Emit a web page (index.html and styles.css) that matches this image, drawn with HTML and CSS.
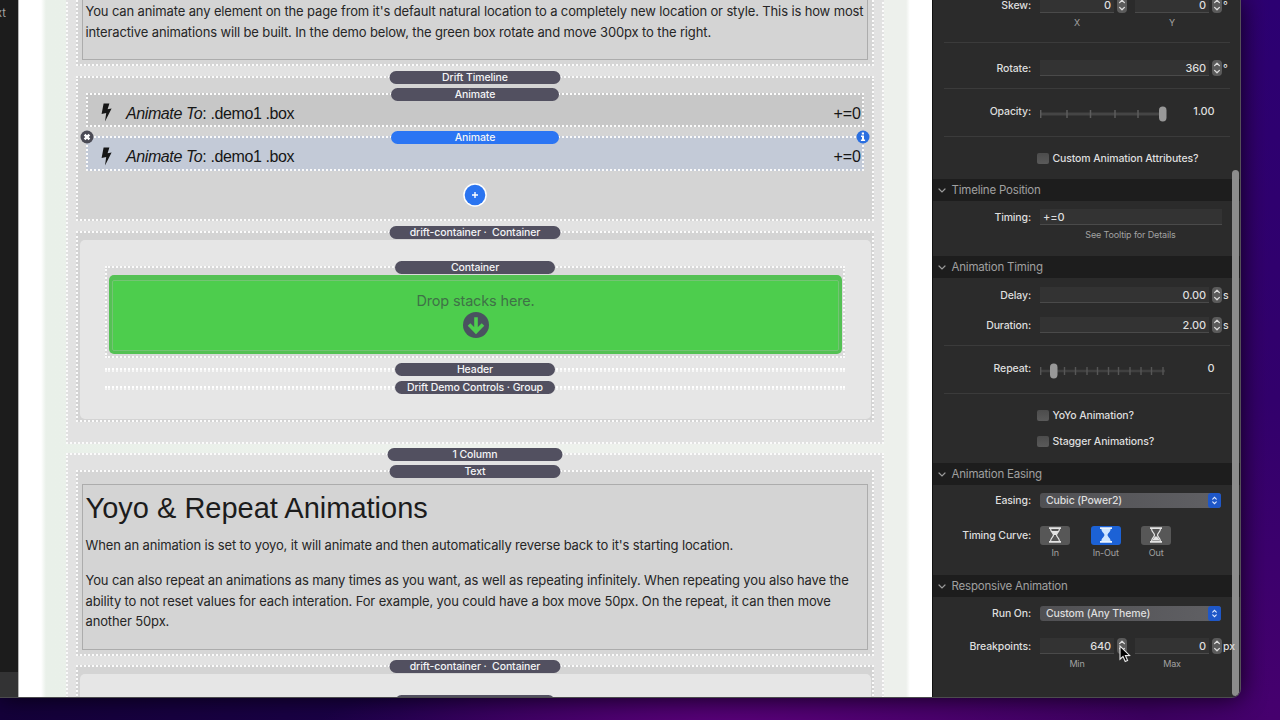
FILE: index.html
```
<!DOCTYPE html>
<html lang="en">
<head>
    <meta charset="UTF-8">
    <meta name="viewport" content="width=device-width, initial-scale=1.0">
    <title>Drift Demo</title>
    <link rel="stylesheet" href="styles.css">
</head>
<body>

<svg class="sprite" width="0" height="0">
    <symbol id="bolt" viewBox="0 0 11 19">
        <path d="M2.6 0.5 H8.4 L6.6 6.2 L10.6 5.6 L4 18.5 L5.2 10 L0.6 11 Z"/>
    </symbol>
    <symbol id="stepper" viewBox="0 0 10 16">
        <rect width="10" height="16" rx="4" fill="#5b5b5b"/>
        <path d="M2.6 5.6 L5 3.2 L7.4 5.6 M2.6 10.4 L5 12.8 L7.4 10.4" fill="none" stroke="#dcdcdc" stroke-width="1.3" stroke-linecap="round" stroke-linejoin="round"/>
    </symbol>
    <symbol id="chevron" viewBox="0 0 8 5">
        <path d="M1 1 L4 4 L7 1" fill="none" stroke="#9a9a9a" stroke-width="1.2" stroke-linecap="round"/>
    </symbol>
    <symbol id="updown" viewBox="0 0 13 15">
        <path d="M4.7 6.2 L6.5 4.4 L8.3 6.2 M4.7 8.8 L6.5 10.6 L8.3 8.8" fill="none" stroke="#dfe9ff" stroke-width="1.1" stroke-linecap="round"/>
    </symbol>
</svg>

<div class="window">
    <div class="sidebar">
        <span class="sidebar-text">xt</span>
        <div class="sidebar-footer"></div>
    </div>

    <div class="canvas">
        <div class="page">
            <div class="stack section section-first">
                <div class="stack text-stack text-stack-first">
                    <div class="text-box">
                        <p>You can animate any element on the page from it's default natural location to a completely new location or style. This is how most<br>interactive animations will be built. In the demo below, the green box rotate and move 300px to the right.</p>
                    </div>
                </div>

                <div class="stack timeline">
                    <span class="pill pill-lg">Drift Timeline</span>
                    <div class="stack animate">
                        <span class="pill pill-md">Animate</span>
                        <svg class="bolt"><use href="#bolt"/></svg>
                        <span class="animate-name"><i>Animate To</i>: .demo1 .box</span>
                        <span class="animate-time">+=0</span>
                    </div>
                    <div class="stack animate selected">
                        <span class="pill pill-md">Animate</span>
                        <svg class="badge badge-close" viewBox="0 0 14 14"><circle cx="7" cy="7" r="6.5" fill="#4b4b55"/><path d="M4.6 4.6 L9.4 9.4 M9.4 4.6 L4.6 9.4" stroke="#fff" stroke-width="2.4"/></svg>
                        <svg class="badge badge-info" viewBox="0 0 14 14"><circle cx="7" cy="7" r="6.5" fill="#2a6fe0"/><path d="M5.8 2.6 H8 V4.5 H5.8 Z M5 5.6 H8 V9.6 H9.1 V11 H4.9 V9.6 H6 V7 H5 Z" fill="#fff"/></svg>
                        <svg class="bolt"><use href="#bolt"/></svg>
                        <span class="animate-name"><i>Animate To</i>: .demo1 .box</span>
                        <span class="animate-time">+=0</span>
                    </div>
                    <svg class="add" viewBox="0 0 24 24"><circle cx="12" cy="12" r="11.8" fill="#fff"/><circle cx="12" cy="12" r="10.3" fill="#2a74f0"/><path d="M12 9 V15 M9 12 H15" stroke="#fff" stroke-width="1.4"/></svg>
                </div>

                <div class="stack container">
                    <span class="pill pill-lg">drift-container ·&nbsp; Container</span>
                    <div class="container-box">
                        <div class="stack drop-stack">
                            <span class="pill pill-sm">Container</span>
                            <div class="drop-box">
                                <div class="drop-inner">
                                    <span class="drop-text">Drop stacks here.</span>
                                    <svg class="drop-icon" viewBox="0 0 26 26"><circle cx="13" cy="13" r="13" fill="#4a5260"/><path d="M13 5.2 V19 M6 12.6 L13 19.6 L20 12.6" fill="none" stroke="#4dcd4d" stroke-width="3.6"/></svg>
                                </div>
                            </div>
                        </div>
                        <div class="empty-stack"><span class="pill pill-sm">Header</span></div>
                        <div class="empty-stack"><span class="pill pill-sm">Drift Demo Controls · Group</span></div>
                    </div>
                </div>
            </div>

            <div class="stack section section-second">
                <span class="pill pill-xl">1 Column</span>
                <div class="stack text-stack">
                    <span class="pill pill-lg">Text</span>
                    <div class="text-box">
                        <h2>Yoyo &amp; Repeat Animations</h2>
                        <p>When an animation is set to yoyo, it will animate and then automatically reverse back to it's starting location.</p>
                        <p>You can also repeat an animations as many times as you want, as well as repeating infinitely. When repeating you also have the<br>ability to not reset values for each interation. For example, you could have a box move 50px. On the repeat, it can then move<br>another 50px.</p>
                    </div>
                </div>
                <div class="stack container">
                    <span class="pill pill-lg">drift-container ·&nbsp; Container</span>
                    <div class="container-box">
                        <div class="stack drop-stack"><span class="pill pill-sm"></span></div>
                    </div>
                </div>
            </div>
        </div>
    </div>

    <div class="inspector">
        <div class="group group-transform">
            <div class="row">
                <label>Skew:</label>
                <span class="field half">0</span><svg class="stepper"><use href="#stepper"/></svg>
                <span class="field half second">0</span><svg class="stepper"><use href="#stepper"/></svg>
                <span class="unit">°</span>
            </div>
            <div class="captions wide"><span>X</span><span>Y</span></div>
            <hr>
            <div class="row rotate">
                <label>Rotate:</label>
                <span class="field">360</span><svg class="stepper"><use href="#stepper"/></svg>
                <span class="unit">°</span>
            </div>
            <hr class="tight">
            <div class="row opacity">
                <label>Opacity:</label>
                <svg class="slider" viewBox="0 0 128 16"><path d="M0 8 H126" stroke="#454545" stroke-width="3"/><path d="M.7 4 V12 M27 4 V12 M50.5 4 V12 M75 4 V12 M98 4 V12" stroke="#5c5c5c" stroke-width="1.5"/><rect x="119" y="0.5" width="7.5" height="15" rx="3.7" fill="#989898"/></svg>
                <span class="value">1.00</span>
            </div>
            <hr class="after">
            <div class="row check"><span class="checkbox"></span>Custom Animation Attributes?</div>
        </div>

        <div class="heading heading-position"><svg class="chevron"><use href="#chevron"/></svg>Timeline Position</div>
        <div class="group">
            <div class="row timing">
                <label>Timing:</label>
                <span class="field text">+=0</span>
            </div>
            <div class="captions single"><span>See Tooltip for Details</span></div>
        </div>

        <div class="heading heading-timing"><svg class="chevron"><use href="#chevron"/></svg>Animation Timing</div>
        <div class="group">
            <div class="row delay">
                <label>Delay:</label>
                <span class="field">0.00</span><svg class="stepper"><use href="#stepper"/></svg>
                <span class="unit">s</span>
            </div>
            <div class="row duration">
                <label>Duration:</label>
                <span class="field">2.00</span><svg class="stepper"><use href="#stepper"/></svg>
                <span class="unit">s</span>
            </div>
            <hr class="tight">
            <div class="row opacity">
                <label>Repeat:</label>
                <svg class="slider" viewBox="0 0 128 16"><path d="M0 8 H125" stroke="#404040" stroke-width="2.5"/><path d="M.7 4 V12 M24.5 4 V12 M35.5 4 V12 M47 4 V12 M57.5 4 V12 M68.5 4 V12 M78.5 4 V12 M90 4 V12 M101 4 V12 M111.5 4 V12 M123 4 V12" stroke="#565656" stroke-width="1.4"/><rect x="10" y="0.5" width="7.5" height="15" rx="3.7" fill="#989898"/></svg>
                <span class="value">0</span>
            </div>
            <hr class="after">
            <div class="row check"><span class="checkbox"></span>YoYo Animation?</div>
            <div class="row check second-check"><span class="checkbox"></span>Stagger Animations?</div>
        </div>

        <div class="heading heading-easing"><svg class="chevron"><use href="#chevron"/></svg>Animation Easing</div>
        <div class="group">
            <div class="row easing">
                <label>Easing:</label>
                <span class="select">Cubic (Power2)<svg class="updown"><use href="#updown"/></svg></span>
            </div>
            <div class="row curve">
                <label>Timing Curve:</label>
                <span class="curve-button"><svg viewBox="0 0 14 16"><path d="M1 1.2 H13 M1 14.8 H13" stroke="#e4e4e4" stroke-width="1.8"/><path d="M2.6 2 C2.6 5 5.5 6 5.5 8 C5.5 10 2.6 11 2.6 14 M11.4 2 C11.4 5 8.5 6 8.5 8 C8.5 10 11.4 11 11.4 14" fill="none" stroke="#e4e4e4" stroke-width="1.2"/><path d="M3.2 4 H10.8 L8 8 H6 Z" fill="#e4e4e4"/></svg></span>
                <span class="curve-button active"><svg viewBox="0 0 14 16"><path d="M1 1.2 H13 M1 14.8 H13" stroke="#eaf4ff" stroke-width="1.8"/><path d="M2.4 2 H11.6 C11.6 5 8.6 6 8.6 8 C8.6 10 11.6 11 11.6 14 H2.4 C2.4 11 5.4 10 5.4 8 C5.4 6 2.4 5 2.4 2 Z" fill="#cfe6ff"/></svg></span>
                <span class="curve-button"><svg viewBox="0 0 14 16"><path d="M1 1.2 H13 M1 14.8 H13" stroke="#e4e4e4" stroke-width="1.8"/><path d="M2.6 2 C2.6 5 5.5 6 5.5 8 C5.5 10 2.6 11 2.6 14 M11.4 2 C11.4 5 8.5 6 8.5 8 C8.5 10 11.4 11 11.4 14" fill="none" stroke="#e4e4e4" stroke-width="1.2"/><path d="M6 9.5 H8 L11 13.5 H3 Z" fill="#e4e4e4"/></svg></span>
            </div>
            <div class="captions curves"><span>In</span><span>In-Out</span><span>Out</span></div>
        </div>

        <div class="heading heading-responsive"><svg class="chevron"><use href="#chevron"/></svg>Responsive Animation</div>
        <div class="group">
            <div class="row run-on">
                <label>Run On:</label>
                <span class="select">Custom (Any Theme)<svg class="updown"><use href="#updown"/></svg></span>
            </div>
            <div class="row breakpoints">
                <label>Breakpoints:</label>
                <span class="field half">640</span><svg class="stepper"><use href="#stepper"/></svg>
                <span class="field half second">0</span><svg class="stepper"><use href="#stepper"/></svg>
                <span class="unit unit-px">px</span>
            </div>
            <div class="captions wide"><span>Min</span><span>Max</span></div>
        </div>
        <div class="scrollbar"></div>
    </div>
</div>

<svg class="cursor" viewBox="0 0 12 18"><path d="M1 1 V14.2 L4 11.5 L6.2 16.5 L8.6 15.4 L6.4 10.6 L10.6 10.4 Z" fill="#000" stroke="#e8e8e8" stroke-width="1.1"/></svg>

</body>
</html>
```
FILE: styles.css
```
* {
    box-sizing: border-box;
}

body {
    margin: 0;
    width: 1280px;
    height: 720px;
    overflow: hidden;
    background:
        radial-gradient(ellipse 420px 60px at 740px 725px, #5a007a, transparent),
        linear-gradient(to right, #14003a 0, #1b0048 400px, #38005e 700px, #3c0060 1150px, transparent 1270px),
        linear-gradient(#2c0072, #32006c 400px, #46006e 720px);
    font-family: Inter, "Liberation Sans", sans-serif;
}

.sprite {
    position: absolute;
}

.window {
    position: relative;
    display: flex;
    width: 1241px;
    height: 698px;
    border-right: 1px solid #555058;
    border-bottom: 1px solid #4c4c4e;
    border-bottom-right-radius: 9px;
    overflow: hidden;
    box-shadow: 0 0 24px 0 rgba(0, 0, 0, 0.75);
}

/* left sidebar */
.sidebar {
    display: flex;
    flex-direction: column;
    justify-content: space-between;
    width: 18px;
    background: #1c1c1c;
    color: #a8a8a8;
    font-size: 11px;
    overflow: hidden;
}

.sidebar-text {
    padding-top: 6px;
    text-indent: -4px;
    line-height: 14px;
}

.sidebar-footer {
    height: 25px;
    background: #333334;
}

/* editing canvas */
.canvas {
    width: 914px;
    height: 697px;
    padding: 0 22px;
    background: #fff;
    border-left: 1px solid #b4b4b4;
    overflow: hidden;
}

.page {
    height: 697px;
    padding: 0 24px 0 25px;
    background: linear-gradient(to right, #fff, #e9f0e9 5px, #edf1ec 50%, #edf0ec 865px, #fff);
    overflow: hidden;
}

.stack {
    position: relative;
    border: 2px dotted #fbfbfb;
}

.section {
    display: flex;
    flex-direction: column;
    gap: 10px;
    width: 818px;
    padding: 0 8px;
    background-color: #e2e2e2;
}

.section-first {
    height: 474px;
    margin-top: -30px;
}

.section-second {
    height: 320px;
    margin-top: 9px;
    padding-top: 15px;
    gap: 9px;
}

.pill {
    position: absolute;
    top: -7.5px;
    left: 50%;
    height: 13px;
    transform: translateX(-50%);
    border-radius: 7px;
    background: #525060;
    color: #f4f4f6;
    font-size: 10.5px;
    font-weight: 500;
    letter-spacing: -0.1px;
    line-height: 13px;
    text-align: center;
    white-space: nowrap;
    z-index: 1;
}

.pill-sm {
    width: 160px;
}

.pill-md {
    width: 168px;
}

.pill-lg {
    width: 171px;
}

.pill-xl {
    width: 175px;
}

.section-second .pill {
    top: -7px;
}

.text-stack {
    height: 186px;
    padding: 12px 4px 4px;
    background-color: #d6d6d6;
}

.text-stack-first {
    height: 94px;
}

.text-box {
    height: 166px;
    padding: 3px 2.5px;
    border: 1px solid #acacac;
    background: #d4d4d4;
    color: #262626;
}

.text-stack-first .text-box {
    height: 74px;
    padding-top: 14px;
}

.text-box p {
    margin: 0 0 14.5px;
    font-size: 13px;
    letter-spacing: -0.135px;
    line-height: 20.5px;
    white-space: nowrap;
}

.text-box h2 {
    margin: 0 0 7px;
    color: #1c1c1c;
    font-family: "Liberation Sans", Arial, sans-serif;
    font-size: 29px;
    font-weight: 400;
    line-height: 40px;
}

/* timeline */
.timeline {
    display: flex;
    flex-direction: column;
    height: 145px;
    padding: 15px 8px 0;
    background-color: #d4d4d4;
}

.animate {
    display: flex;
    align-items: center;
    height: 34px;
    margin-bottom: 9px;
    padding: 7px 1px 0 13px;
    background-color: #c7c7c7;
    color: #161616;
    font-family: "Liberation Sans", Arial, sans-serif;
    font-size: 16px;
}

.animate .pill {
    font-family: Inter, "Liberation Sans", sans-serif;
}

.selected {
    height: 35px;
    background-color: #c3cad7;
}

.selected .pill {
    top: -7px;
    background: #2b75f3;
}

.bolt {
    width: 11px;
    height: 19px;
    margin-right: 14px;
    margin-top: -2px;
    fill: #161616;
}

.animate-name {
    letter-spacing: -0.4px;
}

.animate-time {
    margin-left: auto;
}

.badge {
    position: absolute;
    top: -8px;
    width: 14px;
    height: 14px;
}

.badge-close {
    left: -8px;
}

.badge-info {
    right: -8px;
}

.add {
    align-self: center;
    width: 24px;
    height: 24px;
    margin-top: 3px;
}

/* containers */
.container {
    height: 191px;
    padding: 7px 1px 2px 2px;
    background-color: #d4d4d4;
}

.container-box {
    height: 179px;
    padding: 26px 26px 26px 25px;
    border-radius: 5px;
    background: #e6e6e6;
}

.drop-stack {
    height: 92px;
    margin: 0 0 10px;
    padding: 7px 1px 2px 2px;
    background-color: #dadada;
}

.drop-stack .pill {
    top: -7px;
}

.drop-box {
    height: 79px;
    padding: 5px 3px 3px;
    border-radius: 5px;
    background: #54c154;
}

.drop-inner {
    display: flex;
    flex-direction: column;
    align-items: center;
    height: 71px;
    padding-top: 10px;
    border: 1px solid #74c474;
    border-radius: 2px;
    background: #4dcd4d;
}

.drop-text {
    color: #3f7247;
    font-size: 14.5px;
    letter-spacing: -0.15px;
    line-height: 20px;
}

.drop-icon {
    width: 26px;
    height: 26px;
    margin-top: 1px;
}

.empty-stack {
    position: relative;
    height: 4px;
    margin-bottom: 14px;
    border-top: 2px dotted #fff;
    border-bottom: 2px dotted #f6f6f6;
}

.empty-stack .pill {
    top: -7.5px;
}

/* inspector */
.inspector {
    position: relative;
    width: 308px;
    height: 697px;
    border-left: 1px solid #111;
    background: #2b2b2b;
    color: #dedede;
    font-size: 10.5px;
    font-weight: 500;
    letter-spacing: -0.13px;
    overflow: hidden;
}

.group {
    display: flow-root;
}

.group-transform {
    margin-top: -6px;
}

.row {
    display: flex;
    align-items: center;
    height: 22px;
}

.row label {
    width: 98px;
    margin-right: 9px;
    text-align: right;
    white-space: nowrap;
}

.field {
    width: 169px;
    height: 16px;
    padding-right: 3px;
    border-bottom: 1px solid #4a4a4a;
    background: #333333;
    font-size: 11px;
    line-height: 16px;
    text-align: right;
}

.field.half {
    width: 74px;
}

.field.second {
    margin-left: 8px;
}

.field.text {
    width: 182px;
    padding-left: 3px;
    text-align: left;
}

.stepper {
    width: 10px;
    height: 16px;
    margin-left: 3px;
}

.unit {
    margin-left: 1px;
}

.captions {
    display: flex;
    height: 14px;
    color: #a2a2a2;
    font-size: 9px;
    font-weight: 400;
    line-height: 14px;
    text-align: center;
}

.captions.wide {
    padding-left: 107px;
    gap: 21px;
}

.captions.wide span {
    width: 74px;
}

.captions.single {
    padding-left: 107px;
}

.captions.single span {
    width: 181px;
}

.captions.curves {
    padding-left: 107px;
    gap: 20px;
}

.captions.curves span {
    width: 30.5px;
    white-space: nowrap;
}

hr {
    width: 286px;
    height: 1px;
    margin: 12px 0 0 11px;
    border: none;
    background: #3b3b3b;
}

hr.tight {
    margin-top: 9px;
}

hr.after {
    margin-top: 14px;
}

.row.rotate {
    margin-top: 14px;
}

.row.opacity {
    margin-top: 11px;
}

.slider {
    width: 128px;
    height: 16px;
    margin-top: 6px;
}

.value {
    width: 46.5px;
    font-size: 11px;
    text-align: right;
}

.row.check {
    margin-top: 10px;
    padding-left: 104px;
}

.row.second-check {
    margin-top: 4px;
}

.checkbox {
    width: 12px;
    height: 11px;
    margin-right: 3.5px;
    border-radius: 2px;
    background: linear-gradient(#4c4c4c, #5a5a5a);
}

.heading {
    display: flex;
    align-items: center;
    height: 22px;
    padding-left: 5px;
    background: #1d1d1d;
    color: #a0a0a0;
    font-size: 11.5px;
    font-weight: 400;
    letter-spacing: -0.2px;
}

.chevron {
    width: 8px;
    height: 5px;
    margin-right: 5.5px;
}

.heading-position {
    margin-top: 10px;
}

.heading-timing {
    margin-top: 14px;
}

.heading-easing {
    margin-top: 11px;
}

.heading-responsive {
    margin-top: 15px;
}

.row.timing,
.row.run-on {
    margin-top: 5px;
}

.row.delay {
    margin-top: 6px;
}

.row.duration {
    margin-top: 8px;
}

.row.easing {
    margin-top: 4px;
}

.row.curve {
    margin-top: 13px;
}

.row.breakpoints {
    margin-top: 11px;
}

.select {
    display: flex;
    align-items: center;
    justify-content: space-between;
    width: 181px;
    height: 15px;
    padding-left: 6px;
    border-radius: 3px;
    background: linear-gradient(to right, #505053, #606064);
    white-space: nowrap;
}

.updown {
    width: 13px;
    height: 15px;
    border-radius: 3px;
    background: #1e57c8;
}

.curve-button {
    display: flex;
    align-items: center;
    justify-content: center;
    width: 30px;
    height: 19px;
    margin-right: 20.5px;
    border-radius: 3px;
    background: #575757;
}

.curve-button.active {
    background: #1c62d6;
}

.curve-button svg {
    width: 14px;
    height: 16px;
}

.scrollbar {
    position: absolute;
    top: 170px;
    right: 1px;
    width: 7px;
    height: 526px;
    border-radius: 4px;
    background: #8c8c8c;
}

.unit-px {
    position: relative;
    z-index: 1;
}

.cursor {
    position: absolute;
    left: 1119px;
    top: 645px;
    width: 12px;
    height: 18px;
}
```
